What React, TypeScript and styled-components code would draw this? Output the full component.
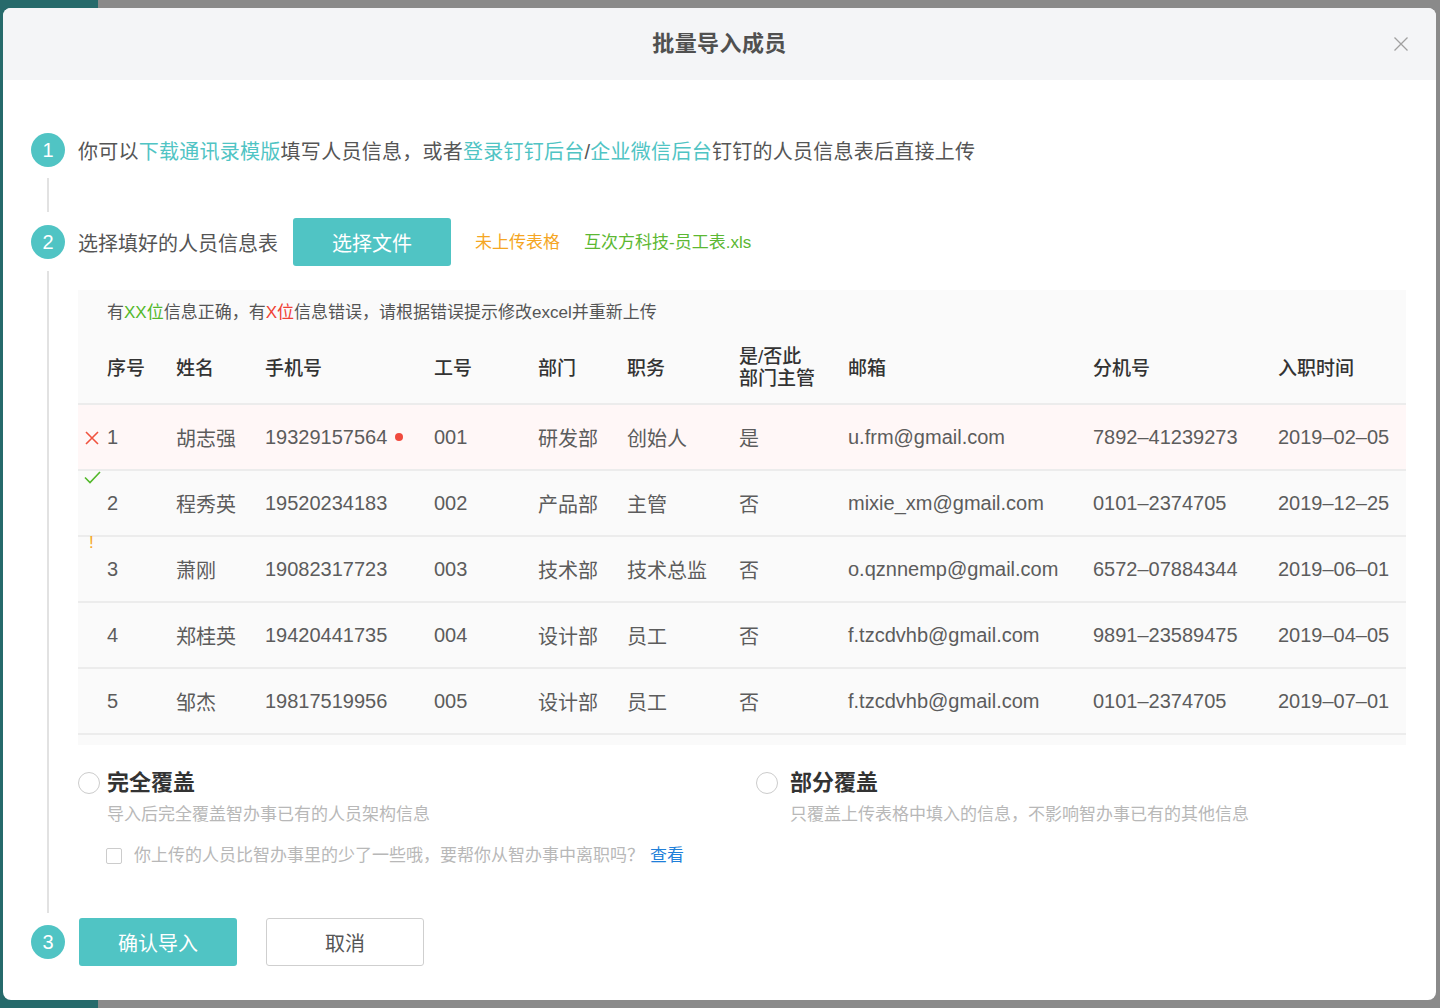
import React from 'react';
import styled, { createGlobalStyle } from 'styled-components';

const TEAL = '#50c4c4';

const GlobalStyle = createGlobalStyle`
  html, body {
    margin: 0;
    padding: 0;
  }
  body {
    font-family: "Liberation Sans", "Noto Sans CJK SC", sans-serif;
    background: linear-gradient(to right, #266a6b 0, #266a6b 98px, #8a8a8a 98px);
    color: #555;
  }
  * {
    box-sizing: border-box;
  }
`;

interface Member {
  seq: string;
  name: string;
  phone: string;
  no: string;
  dept: string;
  title: string;
  manager: string;
  email: string;
  ext: string;
  joined: string;
  status: 'error' | 'ok' | 'warn';
  phoneError?: boolean;
}

const members: Member[] = [
  { seq: '1', name: '胡志强', phone: '19329157564', no: '001', dept: '研发部', title: '创始人', manager: '是', email: 'u.frm@gmail.com', ext: '7892–41239273', joined: '2019–02–05', status: 'error', phoneError: true },
  { seq: '2', name: '程秀英', phone: '19520234183', no: '002', dept: '产品部', title: '主管', manager: '否', email: 'mixie_xm@gmail.com', ext: '0101–2374705', joined: '2019–12–25', status: 'ok' },
  { seq: '3', name: '萧刚', phone: '19082317723', no: '003', dept: '技术部', title: '技术总监', manager: '否', email: 'o.qznnemp@gmail.com', ext: '6572–07884344', joined: '2019–06–01', status: 'warn' },
  { seq: '4', name: '郑桂英', phone: '19420441735', no: '004', dept: '设计部', title: '员工', manager: '否', email: 'f.tzcdvhb@gmail.com', ext: '9891–23589475', joined: '2019–04–05', status: 'ok' },
  { seq: '5', name: '邹杰', phone: '19817519956', no: '005', dept: '设计部', title: '员工', manager: '否', email: 'f.tzcdvhb@gmail.com', ext: '0101–2374705', joined: '2019–07–01', status: 'ok' },
];

export default function App() {
  return (
    <>
      <GlobalStyle />
      <Modal>
        <Header>
          <span />
          <Title>批量导入成员</Title>
          <CloseButton aria-label="close">
            <svg width="16" height="16" viewBox="0 0 16 16">
              <path d="M1.5 1.5 L14.5 14.5 M14.5 1.5 L1.5 14.5" stroke="#a0a0a0" strokeWidth="1.3" fill="none" />
            </svg>
          </CloseButton>
        </Header>
        <Body>
          <Step>
            <Rail $head={34}>
              <StepNum>1</StepNum>
              <RailLine $top={11} $bottom={6} />
            </Rail>
            <StepContent $pad={51}>
              <StepHead $h={34}>
                <StepText $spacing={0.26}>
                  你可以<Link>下载通讯录模版</Link>填写人员信息，或者<Link>登录钉钉后台</Link>/<Link>企业微信后台</Link>钉钉的人员信息表后直接上传
                </StepText>
              </StepHead>
            </StepContent>
          </Step>

          <Step>
            <Rail $head={48}>
              <StepNum>2</StepNum>
              <RailLine $top={12} $bottom={5} />
            </Rail>
            <StepContent $pad={49}>
              <StepHead $h={48}>
                <StepText $spacing={0}>选择填好的人员信息表</StepText>
                <PrimaryButton $ml={15}>选择文件</PrimaryButton>
                <FileNote $color="#f5a623">未上传表格</FileNote>
                <FileNote $color="#5cb833">互次方科技-员工表.xls</FileNote>
              </StepHead>

              <Panel>
                <Message>
                  有<Mark $color="#52b82a">XX位</Mark>信息正确，有<Mark $color="#f04134">X位</Mark>信息错误，请根据错误提示修改excel并重新上传
                </Message>
                <HeadRow>
                  <span>序号</span>
                  <span>姓名</span>
                  <span>手机号</span>
                  <span>工号</span>
                  <span>部门</span>
                  <span>职务</span>
                  <TwoLine>是/否此<br />部门主管</TwoLine>
                  <span>邮箱</span>
                  <span>分机号</span>
                  <span>入职时间</span>
                </HeadRow>
                {members.map((m) => (
                  <DataRow key={m.seq} $error={m.status === 'error'}>
                    {m.status === 'error' && (
                      <ErrorMark width="14" height="14" viewBox="0 0 14 14">
                        <path d="M1 1 L13 13 M13 1 L1 13" stroke="#f0533f" strokeWidth="1.6" fill="none" />
                      </ErrorMark>
                    )}
                    {m.status === 'ok' && m.seq === '2' && (
                      <OkMark width="17" height="13" viewBox="0 0 17 13">
                        <path d="M1 6.5 L6 11.5 L16 1" stroke="#52b82a" strokeWidth="1.6" fill="none" />
                      </OkMark>
                    )}
                    {m.status === 'warn' && <WarnMark>!</WarnMark>}
                    <span>{m.seq}</span>
                    <span>{m.name}</span>
                    <PhoneCell>
                      {m.phone}
                      {m.phoneError && <RedDot />}
                    </PhoneCell>
                    <span>{m.no}</span>
                    <span>{m.dept}</span>
                    <span>{m.title}</span>
                    <span>{m.manager}</span>
                    <span>{m.email}</span>
                    <span>{m.ext}</span>
                    <span>{m.joined}</span>
                  </DataRow>
                ))}
              </Panel>

              <Options>
                <Option>
                  <Radio />
                  <OptionText $gap={7}>
                    <OptionTitle>完全覆盖</OptionTitle>
                    <OptionDesc>导入后完全覆盖智办事已有的人员架构信息</OptionDesc>
                    <CheckRow>
                      <CheckBox />
                      <span>
                        你上传的人员比智办事里的少了一些哦，要帮你从智办事中离职吗？<BlueLink>查看</BlueLink>
                      </span>
                    </CheckRow>
                  </OptionText>
                </Option>
                <Option>
                  <Radio />
                  <OptionText $gap={12}>
                    <OptionTitle>部分覆盖</OptionTitle>
                    <OptionDesc>只覆盖上传表格中填入的信息，不影响智办事已有的其他信息</OptionDesc>
                  </OptionText>
                </Option>
              </Options>
            </StepContent>
          </Step>

          <Step>
            <Rail $head={48}>
              <StepNum>3</StepNum>
            </Rail>
            <StepContent $pad={0}>
              <StepHead $h={48}>
                <PrimaryButton $ml={1}>确认导入</PrimaryButton>
                <GhostButton>取消</GhostButton>
              </StepHead>
            </StepContent>
          </Step>
        </Body>
      </Modal>
    </>
  );
}

const Modal = styled.div`
  margin: 8px 4px 0 3px;
  width: 1433px;
  height: 992px;
  background: #fff;
  border-radius: 8px;
  overflow: hidden;
  display: flex;
  flex-direction: column;
`;

const Header = styled.div`
  height: 72px;
  background: #f4f5f7;
  display: grid;
  grid-template-columns: 1fr auto 1fr;
  align-items: center;
  flex-shrink: 0;
`;

const Title = styled.h1`
  margin: 0;
  line-height: 1;
  font-size: 22px;
  font-weight: 700;
  color: #505050;
  letter-spacing: 0.4px;
`;

const CloseButton = styled.button`
  justify-self: end;
  margin-right: 27px;
  border: none;
  background: transparent;
  padding: 0;
  width: 16px;
  height: 16px;
  display: flex;
  cursor: pointer;
`;

const Body = styled.div`
  padding: 53px 30px 0 28px;
  display: flex;
  flex-direction: column;
`;

const Step = styled.div`
  display: flex;
  align-items: stretch;
`;

const Rail = styled.div<{ $head: number }>`
  width: 34px;
  flex-shrink: 0;
  display: flex;
  flex-direction: column;
  align-items: center;
  padding-top: ${(p) => (p.$head - 34) / 2}px;
`;

const StepNum = styled.div`
  width: 34px;
  height: 34px;
  border-radius: 50%;
  background: ${TEAL};
  color: #fff;
  font-size: 20px;
  display: flex;
  align-items: center;
  justify-content: center;
  flex-shrink: 0;
`;

const RailLine = styled.div<{ $top: number; $bottom: number }>`
  flex: 1;
  width: 2px;
  background: #e2e2e2;
  margin: ${(p) => p.$top}px 0 ${(p) => p.$bottom}px;
`;

const StepContent = styled.div<{ $pad: number }>`
  flex: 1;
  margin-left: 13px;
  padding-bottom: ${(p) => p.$pad}px;
  min-width: 0;
`;

const StepHead = styled.div<{ $h: number }>`
  height: ${(p) => p.$h}px;
  display: flex;
  align-items: center;
`;

const StepText = styled.span<{ $spacing: number }>`
  font-size: 20px;
  color: #555;
  white-space: nowrap;
  letter-spacing: ${(p) => p.$spacing}px;
`;

const Link = styled.span`
  color: ${TEAL};
`;

const PrimaryButton = styled.button<{ $ml: number }>`
  margin-left: ${(p) => p.$ml}px;
  width: 158px;
  height: 48px;
  border: none;
  border-radius: 3px;
  background: ${TEAL};
  color: #fff;
  font-family: inherit;
  font-size: 20px;
  cursor: pointer;
`;

const GhostButton = styled.button`
  margin-left: 29px;
  width: 158px;
  height: 48px;
  border: 1.5px solid #cfcfcf;
  border-radius: 3px;
  background: #fff;
  color: #555;
  font-family: inherit;
  font-size: 20px;
  cursor: pointer;
`;

const FileNote = styled.span<{ $color: string }>`
  margin-left: 24px;
  margin-top: -4px;
  font-size: 17px;
  color: ${(p) => p.$color};
`;

const Panel = styled.div`
  margin-top: 24px;
  background: #fafafa;
  padding-bottom: 10px;
`;

const Message = styled.div`
  height: 45px;
  padding: 0 0 4px 29px;
  display: flex;
  align-items: center;
  font-size: 17px;
  color: #555;
`;

const Mark = styled.span<{ $color: string }>`
  color: ${(p) => p.$color};
`;

const columns = '69px 89px 169px 104px 89px 112px 109px 245px 185px 1fr';

const HeadRow = styled.div`
  display: grid;
  grid-template-columns: ${columns};
  padding: 0 0 5px 29px;
  height: 70px;
  align-items: center;
  border-bottom: 2px solid #ececec;
  font-size: 19px;
  font-weight: 500;
  color: #333;
  white-space: nowrap;
`;

const TwoLine = styled.span`
  line-height: 22px;
  margin-top: 3px;
`;

const DataRow = styled.div<{ $error: boolean }>`
  position: relative;
  display: grid;
  grid-template-columns: ${columns};
  padding-left: 29px;
  height: 66px;
  align-items: center;
  border-bottom: 2px solid #ececec;
  background: ${(p) => (p.$error ? '#fff7f7' : '#fafafa')};
  font-size: 20px;
  color: #5c5c5c;
  white-space: nowrap;
`;

const ErrorMark = styled.svg`
  position: absolute;
  left: 7px;
  top: 26px;
`;

const OkMark = styled.svg`
  position: absolute;
  left: 6px;
  top: 0;
`;

const WarnMark = styled.span`
  position: absolute;
  left: 11px;
  top: -4px;
  font-size: 17px;
  color: #f5a623;
`;

const PhoneCell = styled.span`
  display: flex;
  align-items: center;
`;

const RedDot = styled.span`
  width: 8px;
  height: 8px;
  border-radius: 50%;
  background: #f04a3e;
  margin-left: 8px;
`;

const Options = styled.div`
  display: grid;
  grid-template-columns: 678px 1fr;
  margin-top: 23px;
`;

const Option = styled.div`
  display: flex;
  align-items: flex-start;
`;

const Radio = styled.span`
  width: 22px;
  height: 22px;
  border-radius: 50%;
  border: 1.5px solid #cccccc;
  background: #fff;
  margin-top: 4px;
  flex-shrink: 0;
`;

const OptionText = styled.div<{ $gap: number }>`
  margin-left: ${(p) => p.$gap}px;
  display: flex;
  flex-direction: column;
`;

const OptionTitle = styled.div`
  font-size: 22px;
  line-height: 30px;
  font-weight: 700;
  color: #333;
`;

const OptionDesc = styled.div`
  margin-top: 4px;
  font-size: 17px;
  line-height: 26px;
  color: #b8b8b8;
  white-space: nowrap;
`;

const CheckRow = styled.div`
  margin-top: 15px;
  display: flex;
  align-items: center;
  font-size: 17px;
  line-height: 26px;
  color: #b8b8b8;
  white-space: nowrap;
`;

const CheckBox = styled.span`
  width: 16px;
  height: 16px;
  border: 1.5px solid #cccccc;
  border-radius: 2px;
  background: #fff;
  margin-left: -1px;
  margin-right: 12px;
  flex-shrink: 0;
`;

const BlueLink = styled.span`
  color: #1f7fd9;
  margin-left: 6px;
`;
